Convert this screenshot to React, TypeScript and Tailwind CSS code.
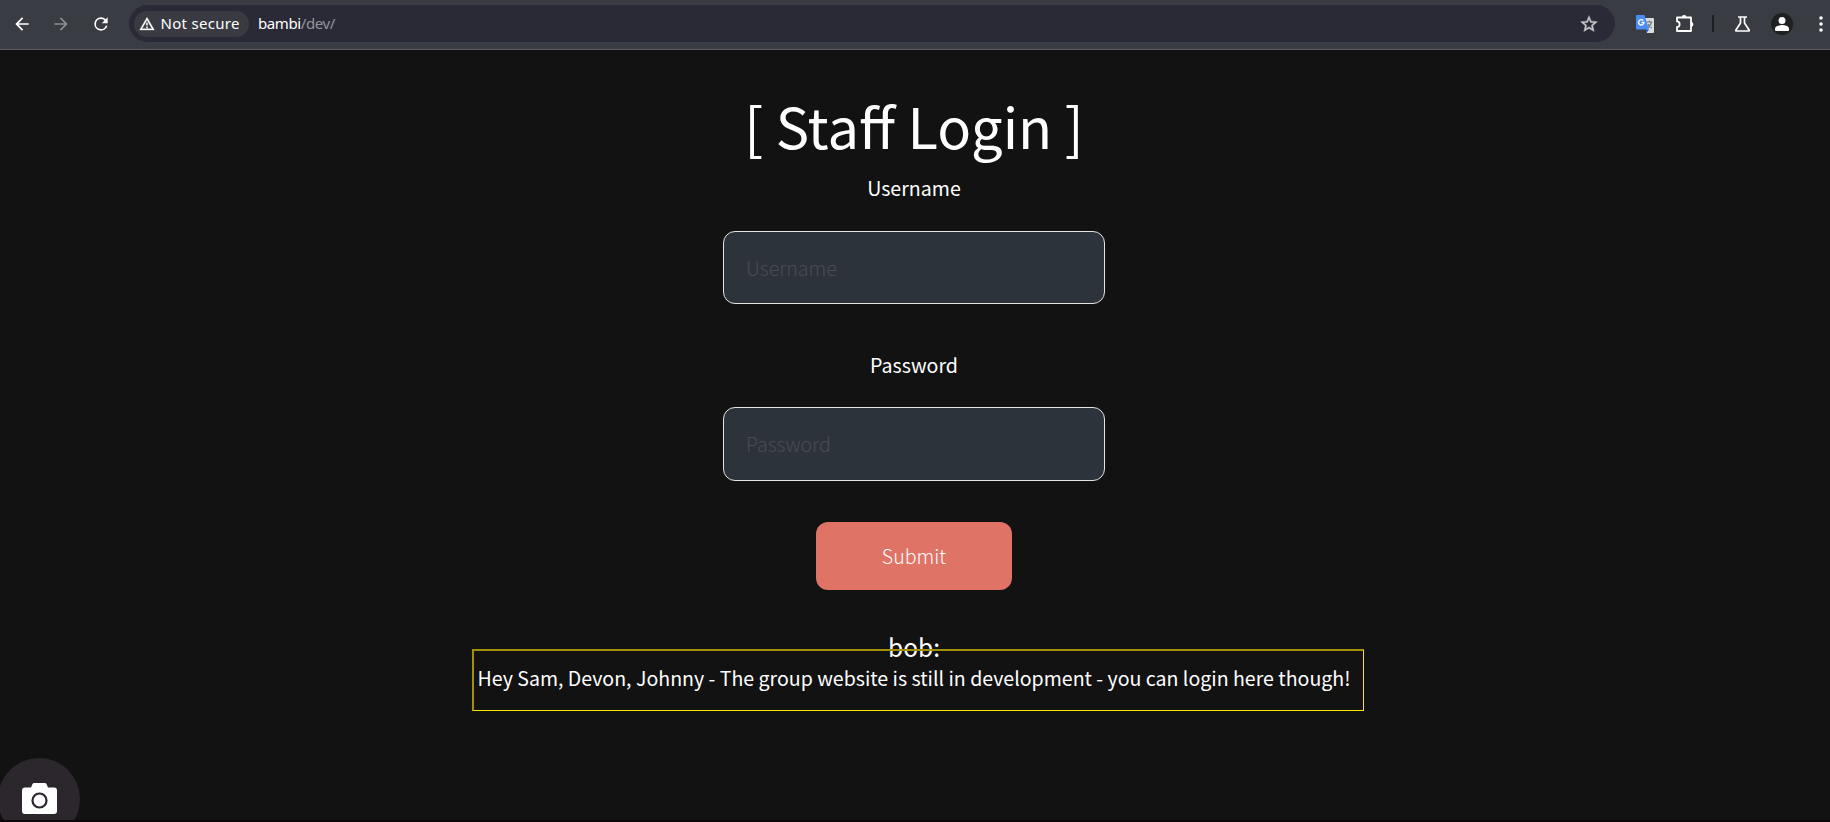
import React from "react";

const SANS = "font-['Noto_Sans_CJK_SC','Noto_Sans',sans-serif]";

function Toolbar() {
  return (
    <header className="flex h-[50px] shrink-0 items-center border-b border-[#5c5e60] bg-[#3a3c44] pb-[2px] font-['Noto_Sans',sans-serif] text-white">
      <svg className="ml-[12px] size-5" viewBox="0 0 24 24" fill="#fff">
        <path d="M20 11H7.83l5.59-5.59L12 4l-8 8 8 8 1.41-1.41L7.83 13H20z" />
      </svg>
      <svg className="ml-[19px] size-5" viewBox="0 0 24 24" fill="#8b8c90">
        <path d="M12 4l-1.41 1.41L16.17 11H4v2h12.17l-5.58 5.59L12 20l8-8z" />
      </svg>
      <svg className="ml-[20px] size-5" viewBox="0 0 24 24" fill="#fff">
        <path d="M17.65 6.35A7.96 7.96 0 0 0 12 4a8 8 0 1 0 7.73 10h-2.08A6 6 0 1 1 12 6c1.66 0 3.14.69 4.22 1.78L13 11h7V4z" />
      </svg>
      <div className="ml-[18px] flex h-[37px] w-[1486px] shrink-0 items-center rounded-full bg-[#292a36] pl-[5px] pr-[16px]">
        <div className="flex h-[26px] w-[115px] items-center rounded-full bg-[#3a3b42] pl-[5px]">
          <svg className="size-4" viewBox="0 0 24 24" fill="#fff" stroke="#fff" strokeWidth="0.500">
            <path d="M12 5.99L19.53 19H4.47L12 5.99M12 2L1 21h22L12 2zm1 14h-2v2h2v-2zm0-6h-2v4h2v-4z" />
          </svg>
          <span className="mb-[2px] ml-[5.500px] whitespace-nowrap text-[15px] leading-5 tracking-[0.3px]">Not secure</span>
        </div>
        <span className="mb-[2px] ml-[9px] text-[15px] leading-5 tracking-[-0.4px]">
          bambi<span className="text-[#94959c]">/dev/</span>
        </span>
        <svg className="ml-auto size-5" viewBox="0 0 24 24" fill="#c7c7c9" stroke="#c7c7c9" strokeWidth="0.500">
          <path d="M22 9.24l-7.19-.62L12 2 9.19 8.63 2 9.24l5.46 4.73L5.82 21 12 17.27 18.18 21l-1.63-7.03L22 9.24zM12 15.4l-3.76 2.27 1-4.28-3.32-2.88 4.38-.38L12 6.1l1.71 4.04 4.38.38-3.32 2.88 1 4.28L12 15.4z" />
        </svg>
      </div>
      <svg className="ml-[20px] size-5" viewBox="0 0 20 20">
        <path d="M9 4h9q1 0 1 1v13q0 1-1 1h-6z" fill="#dcdcdc" />
        <path d="M11.500 8h6M14.500 6.500v1.500M16.500 8q-1 4-4 6M13 10q1.500 3 4 4" stroke="#647b82" strokeWidth="1.200" fill="none" />
        <path d="M2 1h7.500l4.500 14.500H2q-1 0-1-1V2q0-1 1-1z" fill="#4c8df5" />
        <path d="M10.500 15.500H14L11.500 19z" fill="#3155c4" />
        <path d="M8.300 6.500A2.700 2.700 0 1 0 9 8.500H6.500" stroke="#fff" strokeWidth="1.300" fill="none" />
      </svg>
      <svg className="ml-[20px] size-5" viewBox="0 0 20 20">
        <path d="M2 7.500V3.500h14v13.500H2V13c3.500 0 3.500-5.500 0-5.500z" fill="none" stroke="#fff" strokeWidth="1.800" strokeLinejoin="round" />
        <path d="M1 8.400h1.900v3.700H1z" fill="#3a3c44" />
        <path d="M6.700 3.500a2.400 2.400 0 0 1 4.800 0zM16 8a2.400 2.400 0 0 1 0 4.800z" fill="#fff" />
      </svg>
      <div className="ml-[17px] h-[17px] w-[2px] bg-[#1d1e24]" />
      <svg className="ml-[19px] size-5" viewBox="0 0 20 20" fill="none" stroke="#fff" strokeWidth="1.700">
        <path d="M5 3h9M7.500 3v6L2.800 16.200q-.3.800.6.800h12.200q.9 0 .6-.8L11.500 9V3" />
      </svg>
      <svg className="ml-[18px] size-[22px]" viewBox="0 0 22 22">
        <circle cx="11" cy="11" r="11" fill="#1f2021" />
        <circle cx="11" cy="7.500" r="3.500" fill="#fff" />
        <path d="M4 17v-1.500c0-2.500 4.500-3.500 7-3.500s7 1 7 3.500V17q0 1-1 1H5q-1 0-1-1z" fill="#fff" />
      </svg>
      <svg className="ml-[25px] h-5 w-[6px] shrink-0" viewBox="0 0 6 20" fill="#fff">
        <circle cx="3" cy="4" r="1.800" />
        <circle cx="3" cy="10" r="1.800" />
        <circle cx="3" cy="16" r="1.800" />
      </svg>
    </header>
  );
}

export default function App() {
  return (
    <div className={`relative flex h-[822px] w-[1830px] flex-col overflow-hidden bg-[#121212] text-white ${SANS}`}>
      <Toolbar />
      <main className="flex w-[1828px] flex-col items-center">
        <h1 className="mt-[43px] whitespace-nowrap text-[56px] leading-[64px]">[ Staff Login ]</h1>
        <form className="flex flex-col items-center" onSubmit={(e) => e.preventDefault()}>
          <label htmlFor="user" className="mt-[17px] text-[19.6px] leading-7">Username</label>
          <input
            id="user"
            placeholder="Username"
            className="mt-[29px] h-[73px] w-[382px] rounded-[12px] border border-[#e4e4e4] bg-[#2d333b] px-[22px] text-[19.6px] font-light placeholder:text-[#4b4c50] placeholder:opacity-100"
          />
          <label htmlFor="pass" className="mt-[47px] text-[19.6px] leading-7">Password</label>
          <input
            id="pass"
            type="password"
            placeholder="Password"
            className="mt-[28px] h-[74px] w-[382px] rounded-[12px] border border-[#e4e4e4] bg-[#2d333b] px-[22px] pb-[2px] text-[19.6px] font-light placeholder:text-[#4b4c50] placeholder:opacity-100"
          />
          <button className="mt-[41px] h-[68px] w-[196px] rounded-[12px] bg-[#df7366] text-[19.6px] font-light leading-7 text-white">
            Submit
          </button>
        </form>
        <h2 className="mt-[39px] text-[24.5px] leading-9">bob:</h2>
        <p className="mt-[-1px] whitespace-nowrap text-[19.57px] leading-7">
          Hey Sam, Devon, Johnny - The group website is still in development - you can login here though!
        </p>
      </main>
      <div className="absolute left-[472px] top-[649px] h-[62px] w-[892px] border-b border-l-2 border-r border-t-2 border-b-[#ffe600] border-l-[#a49007] border-r-[#ffe600] border-t-[#a49007]" />
      <div className="absolute left-[-2px] top-[758px] flex size-[82px] justify-center rounded-full bg-[#2c272d] pt-[25px]">
        <svg className="h-[31px] w-[35px]" viewBox="0 0 35 31">
          <path d="M3 4.500h6L10.500 1q.5-1 1.500-1h11q1 0 1.500 1L26 4.500h6q3 0 3 3V28q0 3-3 3H3q-3 0-3-3V7.500q0-3 3-3z" fill="#fff" />
          <circle cx="17.500" cy="17.500" r="7" fill="none" stroke="#2c272d" strokeWidth="2.200" />
        </svg>
      </div>
      <div className="absolute bottom-0 left-0 h-[2px] w-full bg-[#0d070b]" />
    </div>
  );
}
